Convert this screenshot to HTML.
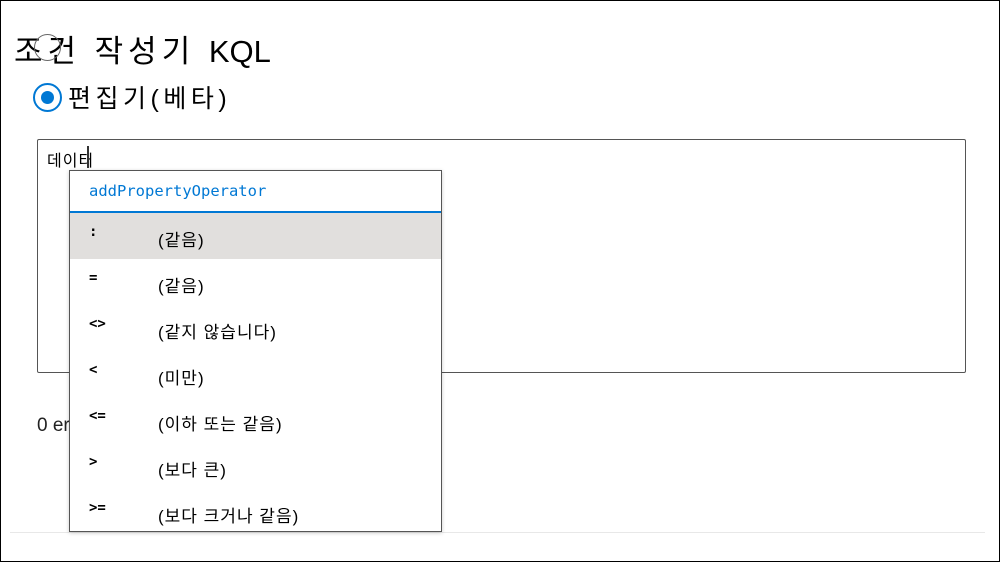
<!DOCTYPE html>
<html><head><meta charset="utf-8"><style>
*{margin:0;padding:0;box-sizing:border-box}
body{width:1000px;height:562px;overflow:hidden;background:#fff;font-family:"Liberation Sans","Noto Sans CJK KR",sans-serif;position:relative}
.frame{position:absolute;left:0;top:0;width:1000px;height:562px;border:1px solid #000}
.title{position:absolute;left:14px;top:26px;font-size:31px;color:#000;white-space:nowrap}
.title .k{letter-spacing:5px}
.circ{position:absolute;left:34px;top:34px;width:27px;height:27px;border:1.5px solid #666;border-radius:50%}
.radio{position:absolute;left:33px;top:83px;width:29px;height:29px;border:2px solid #0078d4;border-radius:50%}
.radio::after{content:"";position:absolute;left:6px;top:6px;width:13px;height:13px;border-radius:50%;background:#0078d4}
.rlabel{position:absolute;left:68px;top:79px;font-size:25px;white-space:nowrap;letter-spacing:4.5px}
.editor{position:absolute;left:37px;top:139px;width:929px;height:234px;border:1px solid #555;border-radius:2px}
.etext{position:absolute;left:47px;top:147px;font-size:16px;letter-spacing:1px}
.caret{position:absolute;left:87px;top:146px;width:2px;height:22px;background:#333}
.err{position:absolute;left:37px;top:415px;font-size:19px;color:#222}
.line{position:absolute;left:10px;top:532px;width:975px;height:1px;background:#e8e8e8}
.dd{position:absolute;left:69px;top:170px;width:373px;height:362px;border:1px solid #555;background:#fff;box-shadow:0 1px 4px rgba(0,0,0,.2)}
.hd{height:42px;border-bottom:2px solid #0078d4;color:#0078d4;font-family:"DejaVu Sans Mono","Liberation Mono",monospace;font-size:15.5px;padding:11px 0 0 19px}
.row{height:46px;position:relative;font-size:17px}
.row.sel{background:#e1dfdd}
.op{position:absolute;left:19px;top:11px;font-family:"DejaVu Sans Mono",monospace;font-weight:bold;font-size:14px}
.lb{position:absolute;left:88px;top:13px;letter-spacing:1px}
</style></head><body>
<div class="frame"></div>
<div class="title"><span class="k">조건 작성기 </span>KQL</div>
<div class="circ"></div>
<div class="radio"></div>
<div class="rlabel">편집기(베타)</div>
<div class="editor"></div>
<div class="etext">데이터</div>
<div class="caret"></div>
<div class="err">0 errors</div>
<div class="line"></div>
<div class="dd">
<div class="hd">addPropertyOperator</div>
<div class="row sel"><span class="op">:</span><span class="lb">(같음)</span></div>
<div class="row"><span class="op">=</span><span class="lb">(같음)</span></div>
<div class="row"><span class="op">&lt;&gt;</span><span class="lb">(같지 않습니다)</span></div>
<div class="row"><span class="op">&lt;</span><span class="lb">(미만)</span></div>
<div class="row"><span class="op">&lt;=</span><span class="lb">(이하 또는 같음)</span></div>
<div class="row"><span class="op">&gt;</span><span class="lb">(보다 큰)</span></div>
<div class="row"><span class="op">&gt;=</span><span class="lb">(보다 크거나 같음)</span></div>
</div>
</body></html>
